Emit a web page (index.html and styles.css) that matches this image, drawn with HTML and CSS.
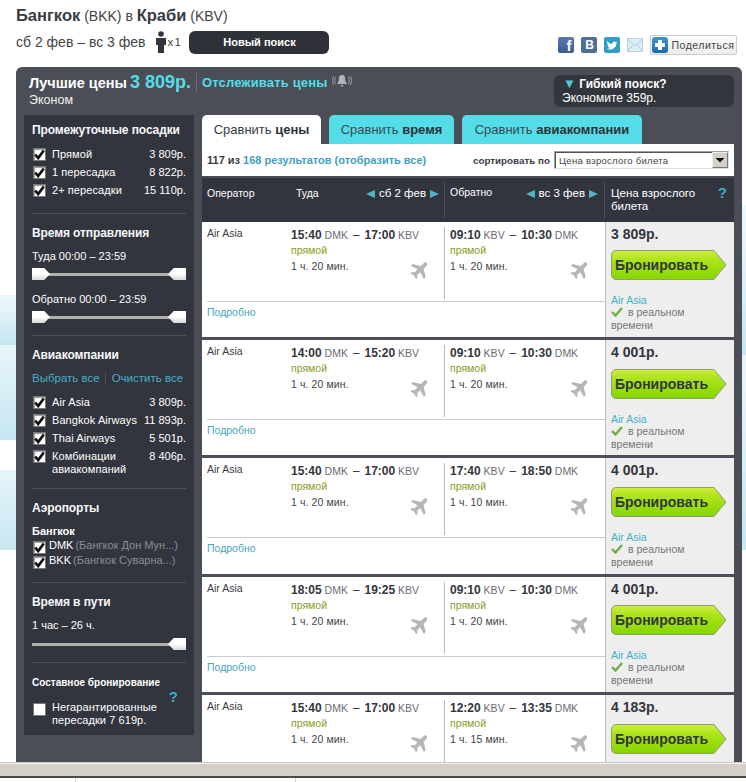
FILE: index.html
```html
<!DOCTYPE html>
<html lang="ru">
<head>
<meta charset="utf-8">
<title>Бангкок — Краби</title>
<link rel="stylesheet" href="styles.css">
</head>
<body>
<svg class="defs" width="0" height="0">
  <symbol id="tick" viewBox="0 0 9 9"><path d="M1 4.500 L3.400 7.400 L8 1.200" fill="none" stroke="#111" stroke-width="2.200"/></symbol>
  <symbol id="plane" viewBox="0 0 18 18"><path d="M16.600 .7c-.9-.7-2.300-.2-3.200 .7L10.700 4.100 2.700 1.900 .9 3.700 7.500 7.300 4.700 10.300 1.900 10 .4 11.500 4 13.400 6 17.300 7.500 15.800 7.200 13 10.200 10.200 13.900 16.900 15.700 15.100 13.600 7 16.200 4.200C17.100 3.300 17.500 1.600 16.600 .7Z" fill="#b4b6b8"/></symbol>
  <symbol id="arrow" viewBox="0 0 116 30" preserveAspectRatio="none">
    <defs><linearGradient id="gr" x1="0" y1="0" x2="0" y2="1"><stop offset="0" stop-color="#cdee3e"/><stop offset=".3" stop-color="#aee41c"/><stop offset="1" stop-color="#84d600"/></linearGradient></defs>
    <path d="M5 .5H103L115 15 103 29.500H5A4.500 4.500 0 0 1 .5 25V5A4.500 4.500 0 0 1 5 .5Z" fill="url(#gr)" stroke="#939c78"/>
  </symbol>
  <symbol id="ok" viewBox="0 0 12 10"><path d="M1 5 L4.500 8.500 L11 1" fill="none" stroke="#6fae45" stroke-width="2.400"/></symbol>
</svg>
<div class="scene">
  <header class="top">
    <h1 class="route"><b>Бангкок</b> (BKK) в <b>Краби</b> (KBV)</h1>
    <div class="subline">
      <span class="dates">сб 2 фев – вс 3 фев</span>
      <svg class="person" viewBox="0 0 12 22" width="12" height="22"><circle cx="6" cy="3" r="2.800" fill="#33353d"/><path d="M1 7h10v7H9v8H3v-8H1Z" fill="#33353d"/></svg>
      <span class="pax">x 1</span>
      <span class="newsearch">Новый поиск</span>
      <span class="social">
        <span class="soc fb">f</span>
        <span class="soc vk">В</span>
        <svg class="soc-svg" viewBox="0 0 16 16" width="16" height="16"><rect width="16" height="16" rx="2" fill="#2d9fc7"/><path d="M3 4c2 2 3.500 2.800 5.300 2.900C8.100 4.900 10.500 3.800 11.700 5.100L13.200 4.700 12.400 6C12.600 9.500 9.500 13 5.300 12.500 4.400 12.400 3.500 12.100 2.900 11.700 4 11.800 5 11.500 5.800 10.900 4.900 10.800 4.200 10.300 3.900 9.500L5 9.400C4 9 3.300 8.200 3.300 7.200L4.300 7.400C3.300 6.500 2.800 5.300 3 4Z" fill="#fff"/></svg>
        <svg class="soc-svg" viewBox="0 0 16 16" width="16" height="16"><rect x=".5" y="1.500" width="15" height="13" fill="#dceef8" stroke="#b5d3e6"/><path d="M.5 2 8 9 15.500 2M.5 14.500 6 7.500M15.500 14.500 10 7.500" fill="none" stroke="#a9cbe0"/></svg>
        <span class="share"><span class="plus"></span>Поделиться</span>
      </span>
    </div>
  </header>

  <main class="panel">
    <div class="panel-head">
      <div class="best">
        <div class="best-line">
          <span class="best-label">Лучшие цены</span>
          <span class="best-price">3 809р.</span>
          <span class="track">Отслеживать цены</span>
          <svg class="bell" viewBox="0 0 20 14" width="20" height="14"><path d="M10 1c2.500 0 3.200 2 3.200 4.500 0 2.500 1.300 3.500 1.800 4.500H5c.5-1 1.800-2 1.800-4.500C6.800 3 7.500 1 10 1ZM8.500 11h3l-1.500 2Z" fill="#aeb4bc"/><path d="M3.500 3C2.500 5 2.500 8 3.500 10M1.500 2C.3 5 .3 8 1.500 11M16.500 3c1 2 1 5 0 7M18.500 2c1.200 3 1.200 6 0 9" fill="none" stroke="#9aa0a8"/></svg>
        </div>
        <div class="cabin">Эконом</div>
      </div>
      <div class="flex-box">
        <div class="flex-title"><span class="tri">▼</span> Гибкий поиск?</div>
        <div>Экономите 359р.</div>
      </div>
    </div>

    <div class="columns">
      <aside class="side">
        <section class="sec sec-stops">
          <h2>Промежуточные посадки</h2>
          <div class="opt"><svg class="cb"><use href="#tick"/></svg><span class="opt-name">Прямой</span><span>3 809р.</span></div>
          <div class="opt"><svg class="cb"><use href="#tick"/></svg><span class="opt-name">1 пересадка</span><span>8 822р.</span></div>
          <div class="opt"><svg class="cb"><use href="#tick"/></svg><span class="opt-name">2+ пересадки</span><span>15 110р.</span></div>
        </section>
        <section class="sec sec-time">
          <h2>Время отправления</h2>
          <div class="range-label">Туда 00:00 – 23:59</div>
          <div class="slider"><i class="h-l"></i><i class="h-r"></i></div>
          <div class="range-label second">Обратно 00:00 – 23:59</div>
          <div class="slider"><i class="h-l"></i><i class="h-r"></i></div>
        </section>
        <section class="sec sec-air">
          <h2>Авиакомпании</h2>
          <div class="links"><span>Выбрать все</span><span class="links-second">Очистить все</span></div>
          <div class="opt"><svg class="cb"><use href="#tick"/></svg><span class="opt-name">Air Asia</span><span>3 809р.</span></div>
          <div class="opt"><svg class="cb"><use href="#tick"/></svg><span class="opt-name">Bangkok Airways</span><span>11 893р.</span></div>
          <div class="opt"><svg class="cb"><use href="#tick"/></svg><span class="opt-name">Thai Airways</span><span>5 501р.</span></div>
          <div class="opt"><svg class="cb"><use href="#tick"/></svg><span class="opt-name">Комбинации<br>авиакомпаний</span><span>8 406р.</span></div>
        </section>
        <section class="sec sec-port">
          <h2>Аэропорты</h2>
          <h3>Бангкок</h3>
          <div class="port"><svg class="cb"><use href="#tick"/></svg><b>DMK</b><span class="port-name">(Бангкок Дон Мун...)</span></div>
          <div class="port"><svg class="cb"><use href="#tick"/></svg><b>BKK</b><span class="port-name">(Бангкок Суварна...)</span></div>
        </section>
        <section class="sec sec-dur">
          <h2>Время в пути</h2>
          <div class="range-label">1 час – 26 ч.</div>
          <div class="slider slider-end"><i class="h-r"></i></div>
        </section>
        <section class="sec sec-combo">
          <h4>Составное бронирование</h4>
          <div class="q q-side">?</div>
          <div class="opt combo"><svg class="cb"></svg><span class="opt-name">Негарантированные<br>пересадки 7 619р.</span></div>
        </section>
      </aside>

      <section class="results">
        <nav class="tabs">
          <span class="tab tab-1 active">Сравнить <b>цены</b></span>
          <span class="tab tab-2">Сравнить <b>время</b></span>
          <span class="tab tab-3">Сравнить <b>авиакомпании</b></span>
        </nav>
        <div class="toolbar">
          <span class="count">117 из <span class="cyan">168 результатов (отобразить все)</span></span>
          <span class="sort">сортировать по</span>
          <span class="select"><span class="select-text">Цена взрослого билета</span><span class="select-btn"></span></span>
        </div>
        <div class="thead">
          <div class="th th-out">
            <span class="th-op">Оператор</span>
            <span class="th-dir">Туда</span>
            <span class="th-date"><i class="ar-l"></i>сб 2 фев<i class="ar-r"></i></span>
          </div>
          <div class="th th-back">
            <span class="th-dir2">Обратно</span>
            <span class="th-date"><i class="ar-l"></i>вс 3 фев<i class="ar-r"></i></span>
          </div>
          <div class="th th-price"><span>Цена взрослого<br>билета</span><span class="q">?</span></div>
        </div>

        <article class="row">
          <div class="r-main">
            <div class="r-flights">
              <div class="r-op">Air Asia</div>
              <div class="leg leg-out"><div class="times"><b>15:40</b> DMK <span class="dash">–</span> <b>17:00</b> KBV</div><div class="stops">прямой</div><div class="dur">1 ч. 20 мин.</div><svg class="plane"><use href="#plane"/></svg></div>
              <div class="leg leg-back"><div class="times"><b>09:10</b> KBV <span class="dash">–</span> <b>10:30</b> DMK</div><div class="stops">прямой</div><div class="dur">1 ч. 20 мин.</div><svg class="plane"><use href="#plane"/></svg></div>
            </div>
            <div class="r-more">Подробно</div>
          </div>
          <div class="r-price"><div class="price">3 809р.</div><div class="book"><svg class="book-bg"><use href="#arrow"/></svg><span>Бронировать</span></div><div class="src">Air Asia</div><div class="live"><svg class="ok"><use href="#ok"/></svg>в реальном<br>времени</div></div>
        </article>
        <article class="row row-low">
          <div class="r-main">
            <div class="r-flights">
              <div class="r-op">Air Asia</div>
              <div class="leg leg-out"><div class="times"><b>14:00</b> DMK <span class="dash">–</span> <b>15:20</b> KBV</div><div class="stops">прямой</div><div class="dur">1 ч. 20 мин.</div><svg class="plane"><use href="#plane"/></svg></div>
              <div class="leg leg-back"><div class="times"><b>09:10</b> KBV <span class="dash">–</span> <b>10:30</b> DMK</div><div class="stops">прямой</div><div class="dur">1 ч. 20 мин.</div><svg class="plane"><use href="#plane"/></svg></div>
            </div>
            <div class="r-more">Подробно</div>
          </div>
          <div class="r-price"><div class="price">4 001р.</div><div class="book"><svg class="book-bg"><use href="#arrow"/></svg><span>Бронировать</span></div><div class="src">Air Asia</div><div class="live"><svg class="ok"><use href="#ok"/></svg>в реальном<br>времени</div></div>
        </article>
        <article class="row row-low row-tall">
          <div class="r-main">
            <div class="r-flights">
              <div class="r-op">Air Asia</div>
              <div class="leg leg-out"><div class="times"><b>15:40</b> DMK <span class="dash">–</span> <b>17:00</b> KBV</div><div class="stops">прямой</div><div class="dur">1 ч. 20 мин.</div><svg class="plane"><use href="#plane"/></svg></div>
              <div class="leg leg-back"><div class="times"><b>17:40</b> KBV <span class="dash">–</span> <b>18:50</b> DMK</div><div class="stops">прямой</div><div class="dur">1 ч. 10 мин.</div><svg class="plane"><use href="#plane"/></svg></div>
            </div>
            <div class="r-more">Подробно</div>
          </div>
          <div class="r-price"><div class="price">4 001р.</div><div class="book"><svg class="book-bg"><use href="#arrow"/></svg><span>Бронировать</span></div><div class="src">Air Asia</div><div class="live"><svg class="ok"><use href="#ok"/></svg>в реальном<br>времени</div></div>
        </article>
        <article class="row">
          <div class="r-main">
            <div class="r-flights">
              <div class="r-op">Air Asia</div>
              <div class="leg leg-out"><div class="times"><b>18:05</b> DMK <span class="dash">–</span> <b>19:25</b> KBV</div><div class="stops">прямой</div><div class="dur">1 ч. 20 мин.</div><svg class="plane"><use href="#plane"/></svg></div>
              <div class="leg leg-back"><div class="times"><b>09:10</b> KBV <span class="dash">–</span> <b>10:30</b> DMK</div><div class="stops">прямой</div><div class="dur">1 ч. 20 мин.</div><svg class="plane"><use href="#plane"/></svg></div>
            </div>
            <div class="r-more">Подробно</div>
          </div>
          <div class="r-price"><div class="price">4 001р.</div><div class="book"><svg class="book-bg"><use href="#arrow"/></svg><span>Бронировать</span></div><div class="src">Air Asia</div><div class="live"><svg class="ok"><use href="#ok"/></svg>в реальном<br>времени</div></div>
        </article>
        <article class="row row-low row-last">
          <div class="r-main">
            <div class="r-flights">
              <div class="r-op">Air Asia</div>
              <div class="leg leg-out"><div class="times"><b>15:40</b> DMK <span class="dash">–</span> <b>17:00</b> KBV</div><div class="stops">прямой</div><div class="dur">1 ч. 20 мин.</div><svg class="plane"><use href="#plane"/></svg></div>
              <div class="leg leg-back"><div class="times"><b>12:20</b> KBV <span class="dash">–</span> <b>13:35</b> DMK</div><div class="stops">прямой</div><div class="dur">1 ч. 15 мин.</div><svg class="plane"><use href="#plane"/></svg></div>
            </div>
          </div>
          <div class="r-price"><div class="price">4 183р.</div><div class="book"><svg class="book-bg"><use href="#arrow"/></svg><span>Бронировать</span></div></div>
        </article>
      </section>
    </div>
  </main>
</div>
<footer class="winbar"></footer>
<div class="winfoot"><i class="tick tick-a"></i><i class="tick tick-b"></i></div>
</body>
</html>
```

FILE: styles.css
```css
* { box-sizing: border-box; }
html, body { margin: 0; padding: 0; }
body {
  width: 746px;
  height: 782px;
  overflow: hidden;
  display: flex;
  flex-direction: column;
  font-family: "Liberation Sans", Arial, sans-serif;
  color: #3a3c44;
  background: #fff;
}
.defs { display: block; height: 0; }
h1, h2, h3, h4 { margin: 0; }
i { display: block; }

.scene {
  height: 762px;
  flex: none;
  overflow: hidden;
  padding: 0 4px 0 16px;
  background-color: #fff;
  background-image:
    radial-gradient(circle 60px at 44px 262px, #d3ecf5 99%, transparent 100%),
    linear-gradient(180deg, #eef8fc 0, #c6e6f1 100%),
    linear-gradient(180deg, #eef8fc 0, #c6e6f1 100%),
    radial-gradient(circle 70px at -30px 510px, #fff 99%, transparent 100%),
    linear-gradient(180deg, #e8f6fb 0, #c6e6f1 100%),
    linear-gradient(180deg, #e8f6fb 0, #c6e6f1 100%),
    linear-gradient(180deg, #e6f5fa 0, #c8e7f2 100%);
  background-repeat: no-repeat;
  background-size:
    16px 146px,
    16px 50px,
    4px 150px,
    16px 110px,
    16px 95px,
    4px 195px,
    16px 80px;
  background-position:
    0 195px,
    0 295px,
    742px 205px,
    0 440px,
    0 345px,
    742px 355px,
    0 470px;
}

/* top strip */
.top { height: 67px; padding-top: 5px; }
.route { font-size: 14px; font-weight: 400; line-height: 20px; color: #444; white-space: nowrap; }
.route b { font-size: 16.500px; color: #3a3c44; }
.subline { display: flex; align-items: center; margin-top: 4px; height: 24px; font-size: 14px; color: #444; }
.person { margin-left: 10px; flex: none; }
.pax { font-size: 11.500px; margin-left: 0; width: 22px; word-spacing: -2px; }
.newsearch {
  width: 140px; height: 23px; line-height: 23px; text-align: center;
  background: #2f3138; color: #fff; border-radius: 6px; font-size: 11px; font-weight: 700;
}
.social { display: flex; align-items: center; gap: 7px; margin-left: 229px; margin-top: 6px; }
.soc { width: 16px; height: 16px; border-radius: 2px; color: #fff; font-weight: 700; font-size: 13px; line-height: 17px; text-align: center; flex: none; }
.fb { background: linear-gradient(180deg, #5b79b0, #3a5a98); font-size: 15px; text-align: right; padding-right: 3px; }
.vk { background: #4d709a; font-size: 12px; }
.soc-svg { flex: none; }
.share {
  width: 87px; height: 20px; border: 1px solid #ccc; border-radius: 2px; margin-top: -1px;
  display: flex; align-items: center; gap: 3px; padding-left: 1px;
  font-size: 10.500px; letter-spacing: .5px; color: #444; background: linear-gradient(180deg, #fff, #ececec);
}
.plus {
  width: 16px; height: 16px; border-radius: 3px; flex: none;
  background:
    linear-gradient(#fff, #fff) center / 10px 4px no-repeat,
    linear-gradient(#fff, #fff) center / 4px 10px no-repeat,
    linear-gradient(180deg, #3f97d8, #1a6aae);
}

/* panel */
.panel {
  width: 726px;
  height: 695px;
  background: #4b4e57;
  border-radius: 6px 6px 0 0;
  overflow: hidden;
}
.panel-head { height: 48px; display: flex; justify-content: space-between; padding: 6px 8px 0 13px; color: #fff; }
.best-line { display: flex; align-items: center; height: 19px; white-space: nowrap; }
.best-label { font-size: 14.500px; font-weight: 700; }
.best-price { font-size: 18px; font-weight: 700; color: #54dde8; margin-left: 3px; padding-right: 5px; border-right: 1px solid #6a6e78; line-height: 19px; }
.track { font-size: 13px; font-weight: 700; color: #54dde8; margin-left: 5px; letter-spacing: .15px; }
.bell { margin-left: 5px; margin-top: -3px; }
.cabin { font-size: 12.500px; margin-top: 0; line-height: 16px; color: #f0f0f0; }
.flex-box {
  width: 180px; height: 32px; background: #33353d; border-radius: 6px; margin-top: 2px;
  padding: 2px 0 0 8px; font-size: 12px; line-height: 14px; color: #fff;
}
.flex-title { font-weight: 700; padding-left: 1px; }
.tri { color: #54c9d8; font-size: 13px; line-height: 12px; }

.columns { display: flex; gap: 8px; padding-left: 8px; }

/* sidebar */
.side { width: 170px; height: 620px; flex: none; background: #33353e; color: #fff; padding: 0 8px; font-size: 11px; }
.sec { border-bottom: 1px solid #4e515a; }
.sec:last-child { border-bottom: 0; }
.sec h2 { font-size: 12px; font-weight: 700; line-height: 14px; white-space: nowrap; letter-spacing: -.1px; color: #f6f8fa; }
.sec-stops { height: 99px; padding-top: 8px; }
.sec-stops h2 { margin-bottom: 11px; }
.sec-time { height: 122px; padding-top: 12px; }
.sec-air { height: 153px; padding-top: 12px; }
.sec-port { height: 94px; padding-top: 12px; }
.sec-dur { height: 80px; padding-top: 12px; }
.sec-combo { padding-top: 14px; position: relative; }
.opt { display: flex; min-height: 18px; line-height: 13px; }
.opt-name { flex: 1; white-space: nowrap; letter-spacing: .08px; }
.cb {
  width: 13px; height: 13px; flex: none; margin: 0 6px 0 1px; padding: 0;
  background: #fff; border: 1px solid #777; box-shadow: inset 1px 1px 1px #999;
}
.range-label { line-height: 13px; margin-top: 10px; font-size: 11px; }
.range-label.second { margin-top: 13px; }
.slider {
  display: flex; justify-content: space-between; height: 12px; margin-top: 5px;
  background: linear-gradient(#b0b0b0, #b0b0b0) center / 100% 3px no-repeat;
}
.slider-end { justify-content: flex-end; margin-top: 6px; }
.h-l, .h-r { width: 18px; height: 12px; background: linear-gradient(180deg, #fff 50%, #d8d8d8); }
.h-l { clip-path: polygon(0 0, 68% 0, 100% 50%, 68% 100%, 0 100%); }
.h-r { clip-path: polygon(32% 0, 100% 0, 100% 100%, 32% 100%, 0 50%); }
.links { display: flex; color: #45aec2; line-height: 13px; margin: 10px 0 11px; white-space: nowrap; font-size: 11.500px; }
.links-second { margin-left: 5px; padding-left: 6px; border-left: 1px solid #4e515a; }
h3 { font-size: 11px; line-height: 13px; margin: 10px 0 1px; }
.port { display: flex; line-height: 13px; height: 15px; white-space: nowrap; align-items: flex-start; }
.port .cb { margin-right: 3px; margin-top: 2px; }
.port b { font-weight: 400; margin-right: 2px; }
.port-name { color: #8a8e98; }
h4 { font-size: 10px; line-height: 12px; font-weight: 700; white-space: nowrap; }
.q { color: #3ea9c9; font-weight: 700; font-size: 15px; line-height: 16px; }
.q-side { position: absolute; right: 8px; top: 26px; }
.combo { margin-top: 12px; }
.combo .cb { margin-top: 2px; margin-right: 6px; box-shadow: none; }

/* results */
.results { width: 532px; flex: none; }
.tabs { display: flex; height: 29px; gap: 8px; }
.tab {
  display: block; height: 29px; line-height: 30px; text-align: center; font-size: 13px;
  background: #54dde8; color: #3a4a52; border-radius: 5px 5px 0 0; white-space: nowrap;
}
.tab b { color: #2f3138; }
.tab-1 { width: 119px; }
.tab-2 { width: 125px; }
.tab-3 { width: 180px; }
.tab.active { background: #fff; color: #3a3c44; }
.toolbar { height: 32px; background: #fff; display: flex; align-items: center; padding-left: 5px; font-size: 11px; font-weight: 700; white-space: nowrap; margin-bottom: 2px; }
.count { width: 266px; color: #3a3c44; }
.cyan { color: #3f9fc0; }
.sort { width: 81px; font-size: 9.800px; }
.select {
  width: 175px; height: 18px; display: flex; align-items: center; justify-content: space-between;
  border: 1px solid #a0a0a0; border-right-color: #ddd; border-bottom-color: #ddd;
  font-weight: 400; font-size: 9.500px; color: #444; padding-left: 4px; letter-spacing: .3px; box-shadow: inset 1px 1px 0 #555;
}
.select-btn {
  width: 16px; height: 16px; background: #d4d0c8; border: 1px solid #777; border-top-color: #eee; border-left-color: #eee;
  background-image: linear-gradient(45deg, transparent 50%, #111 50%), linear-gradient(-45deg, transparent 50%, #111 50%);
  background-size: 4px 4px, 4px 4px; background-position: 3px 5px, 7px 5px; background-repeat: no-repeat;
}

.thead { display: grid; grid-template-columns: 242px 161px 129px; height: 44px; background: #33353e; color: #fff; font-size: 10.500px; }
.th { line-height: 13px; }
.th-out { display: flex; padding-left: 5px; margin-top: 4px; padding-top: 5px; height: 36px; }
.th-op { width: 89px; }
.th-dir { width: 70px; font-weight: 400; }
.th-date { display: flex; align-items: center; gap: 4px; height: 13px; font-size: 11.500px; }
.th-back { display: flex; justify-content: space-between; padding: 4px 6px 0 5px; margin-top: 4px; height: 36px; border-left: 1px solid #4e515a; border-right: 1px solid #4e515a; }
.th-back .th-date { margin-top: 1px; }
.th-price { display: flex; justify-content: space-between; padding: 9px 7px 0 6px; font-size: 11.500px; }
.th-price .q { margin-top: -2px; }
.ar-l, .ar-r { width: 0; height: 0; border-style: solid; border-width: 4px 0; border-color: transparent; }
.ar-l { border-right: 9px solid #54b4c8; }
.ar-r { border-left: 9px solid #54b4c8; }

.row { display: grid; grid-template-columns: 403px 129px; height: 118px; border-bottom: 3px solid #4b4e57; background: #fff; overflow: hidden; }
.row-tall { height: 119px; }
.row-last { height: 67px; border-bottom: 0; }
.r-main { padding: 0 0 0 5px; }
.r-flights { display: grid; grid-template-columns: 84px 153px 154px; height: 80px; padding-top: 5px; border-bottom: 1px solid #ccc; }
.r-op { font-size: 10.500px; padding-top: 0; line-height: 12px; }
.leg { position: relative; padding-top: 1px; font-size: 10.500px; color: #444; }
.leg-back { border-left: 1px solid #bbb; padding-left: 5px; height: 72px; }
.times { line-height: 15px; white-space: nowrap; color: #6a6c74; font-size: 10.500px; }
.times b { font-size: 12px; color: #33353d; }
.dash { margin: 0 2px; font-size: 12px; color: #33353d; }
.stops { color: #8a9c1e; line-height: 14px; }
.dur { line-height: 14px; margin-top: 2px; letter-spacing: .1px; }
.plane { position: absolute; left: 119px; top: 35px; width: 18px; height: 18px; }
.leg-back .plane { left: 125px; }
.r-more { font-size: 10.500px; color: #4aa6bd; line-height: 14px; padding-top: 3px; }
.r-price { background: #eee; border-left: 1px solid #bbb; padding: 4px 6px 0 5px; }
.price { font-size: 14px; font-weight: 700; line-height: 17px; color: #33353d; }
.book { position: relative; height: 30px; width: 116px; margin-top: 7px; display: flex; align-items: center; padding-left: 4px; font-size: 14px; font-weight: 700; color: #33353d; }
.row-low .book { margin-top: 8px; }
.book-bg { position: absolute; left: 0; top: 0; width: 116px; height: 30px; }
.book span { position: relative; }
.src { color: #3fb3c4; font-size: 10.500px; line-height: 11px; margin-top: 15px; }
.live { font-size: 10.500px; line-height: 13px; color: #777; }
.ok { width: 12px; height: 10px; margin-right: 5px; vertical-align: -1px; }

.winbar {
  height: 16px; flex: none; background: #d4d0c8;
  border-top: 1px solid #c8c8c0; box-shadow: inset 0 1px 0 #f4f4f0;
  border-bottom: 2px solid #4a4a4a;
}
.winfoot { height: 4px; flex: none; display: flex; background: #fff; padding-left: 75px; }
.tick { width: 1px; height: 4px; background: #cdd8de; }
.tick-b { margin-left: 219px; }
```
